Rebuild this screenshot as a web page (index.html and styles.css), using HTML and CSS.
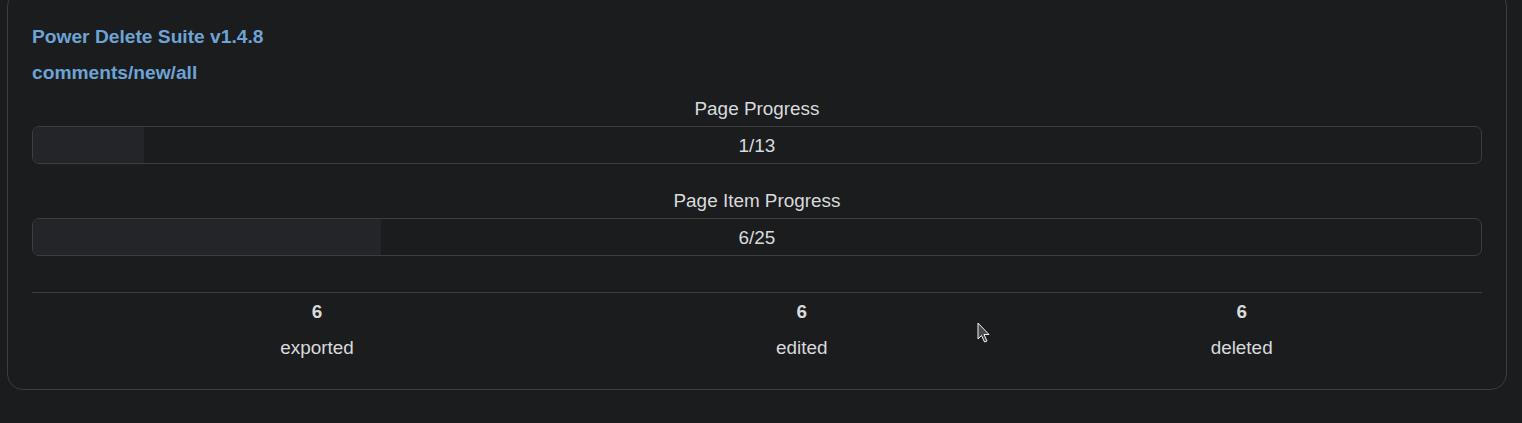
FILE: index.html
```html
<!DOCTYPE html>
<html>
<head>
<meta charset="utf-8">
<link rel="stylesheet" href="styles.css">
</head>
<body>
<div class="card">
  <div class="title">Power Delete Suite v1.4.8</div>
  <div class="title sub">comments/new/all</div>
  <div class="group">
    <div class="label">Page Progress</div>
    <div class="bar">
      <div class="fill" style="width: 7.6923%"></div>
      <div class="bar-text">1/13</div>
    </div>
  </div>
  <div class="group second">
    <div class="label">Page Item Progress</div>
    <div class="bar">
      <div class="fill" style="width: 24%"></div>
      <div class="bar-text">6/25</div>
    </div>
  </div>
  <div class="rule"></div>
  <table class="stats">
    <tr>
      <td><div class="num">6</div><div class="stat-label">exported</div></td>
      <td><div class="num">6</div><div class="stat-label">edited</div></td>
      <td><div class="num">6</div><div class="stat-label">deleted</div></td>
    </tr>
  </table>
  <svg class="cursor" width="14" height="22" viewBox="0 0 14 22">
    <path d="M1 1 L1 17 L4.5 13.5 L7.5 20 L10 19 L7 12.5 L12 12.5 Z" fill="#4a4a4a" stroke="#f0f0f0" stroke-width="1" stroke-linejoin="round"/>
  </svg>
</div>
</body>
</html>
```

FILE: styles.css
```css
html, body {
  margin: 0;
  padding: 0;
  background: #1b1c1e;
}

body {
  font-family: "Liberation Sans", Arial, sans-serif;
  color: #d9dadc;
  overflow: hidden;
}

.card {
  position: relative;
  box-sizing: border-box;
  width: 1500px;
  margin: -10px 0 0 7px;
  padding: 35px 24px 29px;
  border: 1px solid #3c3d40;
  border-radius: 16px;
  background: #1b1c1e;
}

.title {
  font-size: 19.2px;
  line-height: 22px;
  font-weight: bold;
  color: #6ea3d6;
}

.title.sub {
  margin-top: 14px;
}

.group {
  margin-top: 13px;
}

.group.second {
  margin-top: 25px;
}

.label {
  font-size: 18.9px;
  line-height: 24px;
  text-align: center;
  margin-bottom: 5px;
}

.bar {
  display: grid;
  height: 38px;
  box-sizing: border-box;
  border: 1px solid #3c3d40;
  border-radius: 7px;
  overflow: hidden;
}

.fill {
  grid-area: 1 / 1;
  justify-self: start;
  height: 100%;
  background: #242528;
}

.bar-text {
  grid-area: 1 / 1;
  align-self: center;
  text-align: center;
  font-size: 18.9px;
  line-height: 22px;
  padding-top: 2px;
}

.rule {
  margin-top: 36px;
  height: 1px;
  background: #3c3d40;
}

.stats {
  width: 100%;
  border-collapse: collapse;
  margin-top: 7px;
}

.stats td {
  padding: 0;
  text-align: center;
  vertical-align: top;
}

.num {
  font-size: 18.9px;
  line-height: 24px;
  font-weight: bold;
}

.stat-label {
  font-size: 18.9px;
  line-height: 24px;
  margin-top: 12px;
}

.cursor {
  position: absolute;
  left: 969px;
  top: 331px;
}
```
